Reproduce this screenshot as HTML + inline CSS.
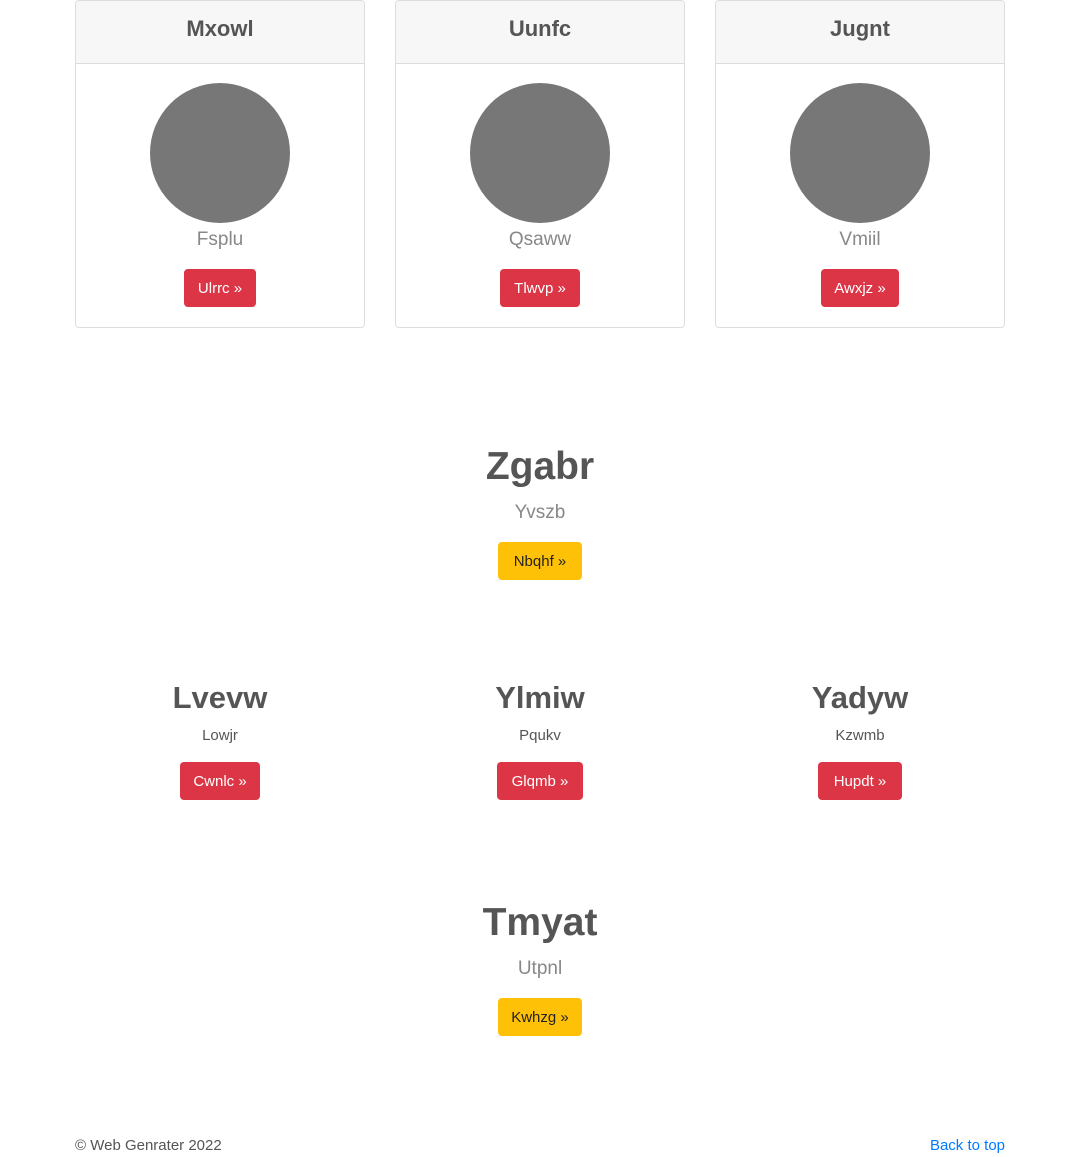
<!DOCTYPE html>
<html><head><meta charset="utf-8"><style>
*{margin:0;padding:0;box-sizing:border-box}
html,body{width:1080px;height:1156px;background:#fff;overflow:hidden;font-family:"Liberation Sans",sans-serif;color:#555}
.a{position:absolute;text-align:center;white-space:nowrap}
.card{position:absolute;top:0;width:290px;height:328px;border:1px solid #ddd;border-radius:4px;overflow:hidden}
.card .h{height:63px;background:#f7f7f7;border-bottom:1px solid #ddd;font-size:22px;font-weight:bold;line-height:56px;text-align:center;color:#555}
.circ{position:absolute;left:74px;top:82px;width:140px;height:140px;border-radius:50%;background:#777}
.card .s{position:absolute;left:0;width:100%;top:226px;font-size:19px;line-height:26px;text-align:center;color:#888}
.btn{position:absolute;height:38px;border-radius:4px;font-size:15px;line-height:40px;text-align:center;color:#fff;background:#dc3545}
.y{background:#ffc107;color:#222}
</style></head><body>
<div class="card" style="left:75px"><div class="h">Mxowl</div><div class="circ"></div><div class="s">Fsplu</div><div class="btn" style="left:108px;top:268px;width:72px">Ulrrc »</div></div>
<div class="card" style="left:395px"><div class="h">Uunfc</div><div class="circ"></div><div class="s">Qsaww</div><div class="btn" style="left:104px;top:268px;width:80px">Tlwvp »</div></div>
<div class="card" style="left:715px"><div class="h">Jugnt</div><div class="circ"></div><div class="s">Vmiil</div><div class="btn" style="left:105px;top:268px;width:78px">Awxjz »</div></div>

<div class="a" style="left:0;width:1080px;top:443px;font-size:39px;font-weight:bold;line-height:48px">Zgabr</div>
<div class="a" style="left:0;width:1080px;top:500px;font-size:19px;line-height:26px;color:#888">Yvszb</div>
<div class="btn y" style="left:498px;top:542px;width:84px">Nbqhf »</div>

<div class="a" style="left:75px;width:290px;top:678px;font-size:31px;font-weight:bold;line-height:40px">Lvevw</div>
<div class="a" style="left:75px;width:290px;top:725px;font-size:15px;line-height:22px">Lowjr</div>
<div class="btn" style="left:180px;top:762px;width:80px">Cwnlc »</div>
<div class="a" style="left:395px;width:290px;top:678px;font-size:31px;font-weight:bold;line-height:40px">Ylmiw</div>
<div class="a" style="left:395px;width:290px;top:725px;font-size:15px;line-height:22px">Pqukv</div>
<div class="btn" style="left:497px;top:762px;width:86px">Glqmb »</div>
<div class="a" style="left:715px;width:290px;top:678px;font-size:31px;font-weight:bold;line-height:40px">Yadyw</div>
<div class="a" style="left:715px;width:290px;top:725px;font-size:15px;line-height:22px">Kzwmb</div>
<div class="btn" style="left:818px;top:762px;width:84px">Hupdt »</div>

<div class="a" style="left:0;width:1080px;top:899px;font-size:39px;font-weight:bold;line-height:48px">Tmyat</div>
<div class="a" style="left:0;width:1080px;top:956px;font-size:19px;line-height:26px;color:#888">Utpnl</div>
<div class="btn y" style="left:498px;top:998px;width:84px">Kwhzg »</div>

<div class="a" style="left:75px;top:1135px;font-size:15px;line-height:22px;text-align:left">© Web Genrater 2022</div>
<div class="a" style="right:75px;top:1135px;font-size:15px;line-height:22px;color:#007bff">Back to top</div>
</body></html>
